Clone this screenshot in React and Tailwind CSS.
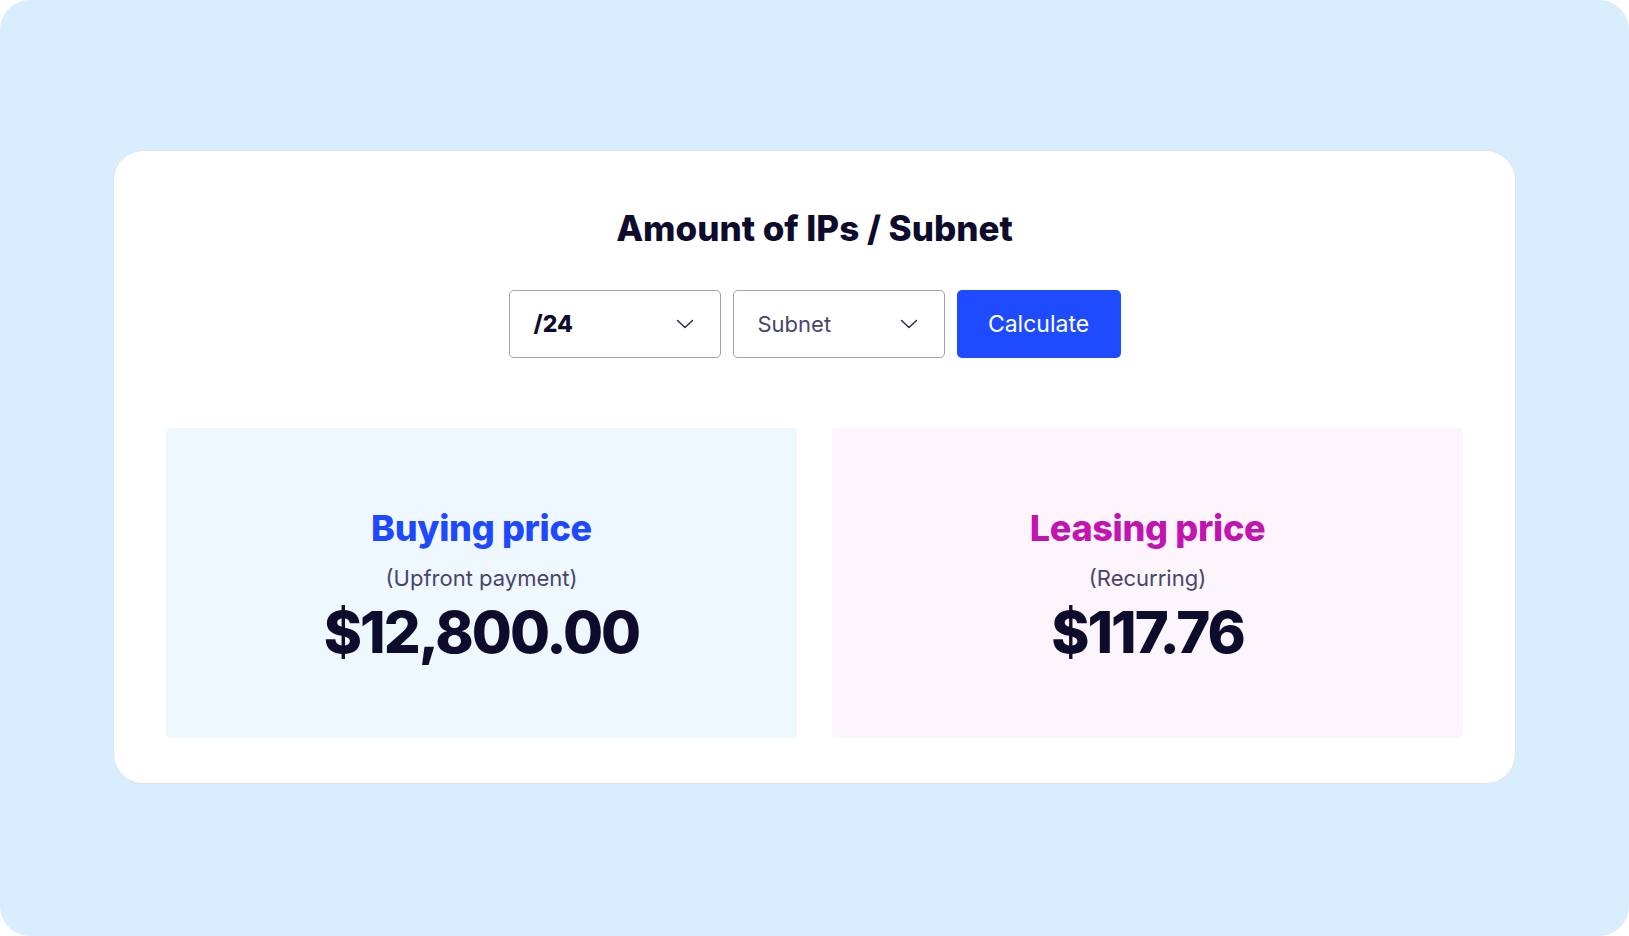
import React from 'react';

const Chevron = () => (
  <svg width="18" height="10" viewBox="0 0 18 10" fill="none" className="shrink-0">
    <path d="M1.5 1.5 9 8.5l7.5-7" stroke="#2a2745" strokeWidth="1.4" strokeLinecap="round" strokeLinejoin="round" />
  </svg>
);

const Select = ({ value, bold }) => (
  <div className="flex h-[68px] w-[212px] items-center justify-between rounded-[5px] border border-[#a19ec4] bg-white pl-6 pr-[26px]">
    <span className={bold ? 'text-[23px] font-extrabold text-[#0e0c2c]' : 'text-[22px] text-[#48456a]'}>{value}</span>
    <Chevron />
  </div>
);

const PriceCard = ({ title, note, amount, tone }) => (
  <div className={`flex h-[310px] flex-col items-center justify-center rounded-[4px] pt-[5px] ${tone === 'blue' ? 'bg-[#eff7ff]' : 'bg-[#fcf5fc]'}`}>
    <h3 className={`text-[36px] font-extrabold leading-[44px] tracking-[-0.3px] ${tone === 'blue' ? 'text-[#1f49ff]' : 'text-[#c114b0]'}`}>
      {title}
    </h3>
    <p className="mt-[14px] text-[22px] leading-[28px] text-[#48456a]">{note}</p>
    <p className="mt-[7px] text-[58px] font-extrabold leading-[66px] tracking-[-2px] text-[#0e0c2c]">{amount}</p>
  </div>
);

export default function App() {
  return (
    <div className="h-[936px] w-[1629px] bg-white font-['Inter',sans-serif]">
      <div className="h-full rounded-[30px] bg-[#d8edfe] px-[113px] pt-[150px]">
        <div className="rounded-[30px] border border-[#e3e1ee] bg-white px-[52px] pb-[45px] pt-[55px]">
          <h2 className="text-center text-[35px] font-extrabold leading-[44px] text-[#0e0c2c]">
            Amount of IPs / Subnet
          </h2>

          <div className="mt-[40px] flex justify-center gap-3">
            <Select value="/24" bold />
            <Select value="Subnet" />
            <button className="h-[68px] w-[164px] rounded-[5px] bg-[#1f4bff] text-[23px] text-white">
              Calculate
            </button>
          </div>

          <div className="mt-[70px] grid grid-cols-2 gap-[35px]">
            <PriceCard title="Buying price" note="(Upfront payment)" amount="$12,800.00" tone="blue" />
            <PriceCard title="Leasing price" note="(Recurring)" amount="$117.76" tone="pink" />
          </div>
        </div>
      </div>
    </div>
  );
}
